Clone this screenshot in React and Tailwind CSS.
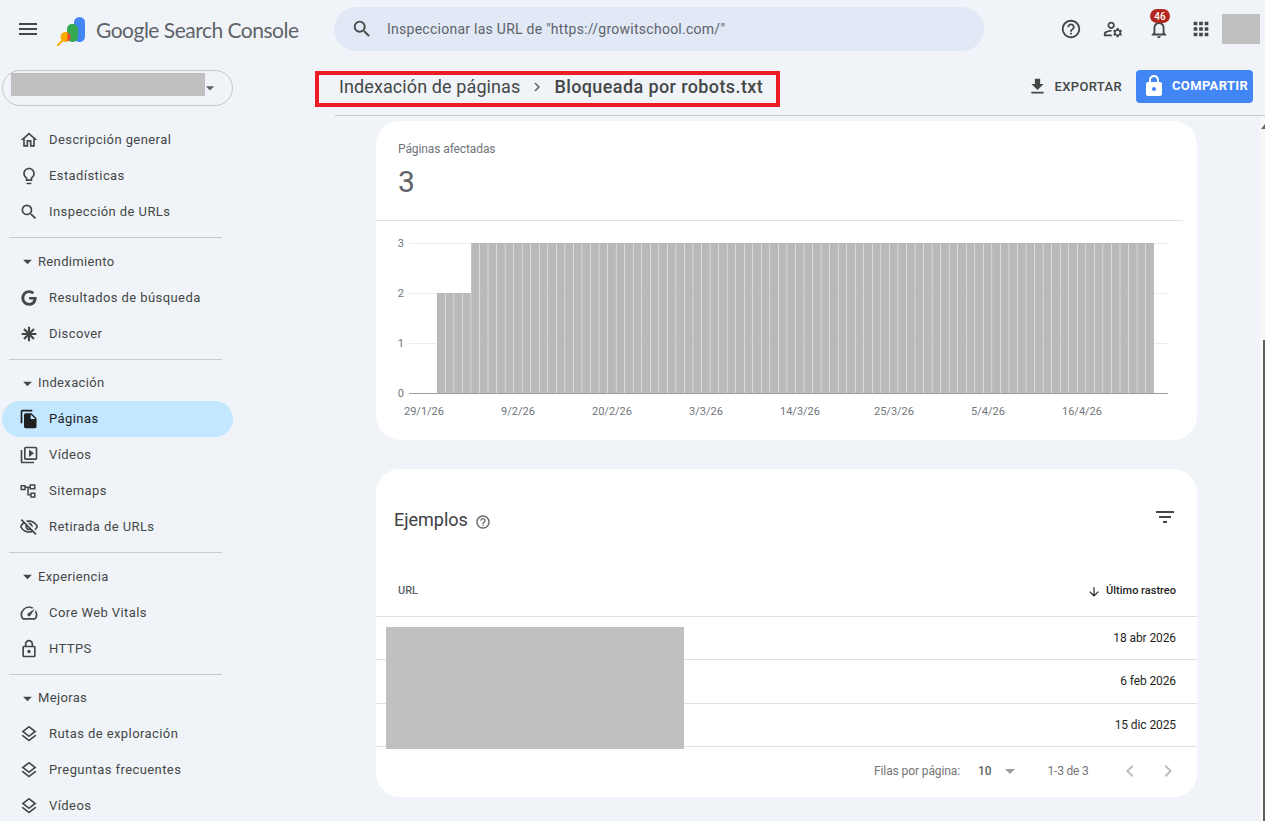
import {
  MdMenu, MdSearch, MdHelpOutline, MdOutlineManageAccounts, MdOutlineNotifications, MdApps,
  MdArrowDropDown, MdOutlineHome, MdOutlineLightbulb, MdFileCopy, MdOutlineVideoLibrary,
  MdOutlineVisibilityOff, MdOutlineSpeed, MdOutlineLock, MdOutlineLayers, MdFileDownload,
  MdLock, MdFilterList, MdArrowDownward, MdChevronLeft, MdChevronRight, MdOutlineHelpOutline,
} from "react-icons/md";
import { FaGoogle } from "react-icons/fa";

const Asterisk = ({ className }) => (
  <svg viewBox="0 0 24 24" className={className} fill="none" stroke="currentColor" strokeWidth="3.2">
    <path d="M12 1v22M1 12h22M4.5 4.5l15 15M19.5 4.5l-15 15" />
  </svg>
);

const SitemapIcon = ({ className }) => (
  <svg viewBox="0 0 24 24" className={className} fill="none" stroke="currentColor" strokeWidth="2">
    <path d="M3 5h5v5H3zM15 4h6v5h-6zM16 15h5v5h-5zM8 7h7M12 7v10h4" />
  </svg>
);

const Logo = () => (
  <svg viewBox="0 0 30 30" className="w-[30px] h-[30px] shrink-0 mt-1">
    <rect x="17" y="1" width="11" height="25" rx="5.5" fill="#4285f4" />
    <rect x="10" y="8" width="11" height="18" rx="5" fill="#34a853" />
    <circle cx="8.5" cy="21" r="5" fill="#f9ab00" />
    <path d="M10.5 16.4a5 5 0 0 1 0 9.2z" fill="#ea4335" />
    <path d="M5 25L1 29" stroke="#f9ab00" strokeWidth="2.2" strokeLinecap="round" />
  </svg>
);

const NavItem = ({ icon: Icon, label, active, iconClass = "w-5 h-5" }) => (
  <div className={`flex items-center h-9 rounded-full pl-[17px] text-[13px] tracking-[0.42px] ${active ? "bg-[#c2e7ff] text-[#1f1f1f]" : "text-[#444746]"}`}>
    <span className="w-[30px] shrink-0 flex items-center">
      <Icon className={`${iconClass} ${active ? "text-[#1f1f1f]" : "text-[#444746]"}`} />
    </span>
    {label}
  </div>
);

const Section = ({ title, children }) => (
  <div>
    <div className="h-px bg-[#c7c9cc] ml-[7px] w-[213px] mt-[7px] mb-[5.5px]" />
    <div className="flex items-center h-9 pl-[15px] text-[13px] tracking-[0.35px] text-[#444746]">
      <MdArrowDropDown className="w-[21px] h-[21px]" />
      {title}
    </div>
    {children}
  </div>
);

const Sidebar = () => (
  <aside className="w-[235px] shrink-0 px-0.5">
    <div className="h-[58px] flex items-center pl-[14px]">
      <MdMenu className="w-6 h-6 shrink-0 text-[#444746] mr-[17px]" />
      <Logo />
      <span className="ml-[9px] mt-0.5 text-[21px] tracking-[-0.5px] text-[#5f6368] whitespace-nowrap font-['Lato',sans-serif]">Google Search Console</span>
    </div>
    <div className="mt-3 h-9 w-[231px] rounded-full border border-[#c4c7c5] flex items-center pl-2">
      <div className="w-[194px] h-[23px] bg-[#c0c0c0] mb-[7px]" />
      <MdArrowDropDown className="w-5 h-5 -ml-[5px] text-[#5f6368]" />
    </div>
    <div className="mt-4">
      <NavItem icon={MdOutlineHome} label="Descripción general" />
      <NavItem icon={MdOutlineLightbulb} label="Estadísticas" />
      <NavItem icon={MdSearch} label="Inspección de URLs" />
    </div>
    <Section title="Rendimiento">
      <NavItem icon={FaGoogle} iconClass="w-4 h-4 ml-0.5" label="Resultados de búsqueda" />
      <NavItem icon={Asterisk} iconClass="w-4 h-4 ml-0.5" label="Discover" />
    </Section>
    <Section title="Indexación">
      <NavItem icon={MdFileCopy} active label="Páginas" />
      <NavItem icon={MdOutlineVideoLibrary} label="Vídeos" />
      <NavItem icon={SitemapIcon} iconClass="w-[18px] h-[18px]" label="Sitemaps" />
      <NavItem icon={MdOutlineVisibilityOff} label="Retirada de URLs" />
    </Section>
    <Section title="Experiencia">
      <NavItem icon={MdOutlineSpeed} label="Core Web Vitals" />
      <NavItem icon={MdOutlineLock} label="HTTPS" />
    </Section>
    <Section title="Mejoras">
      <NavItem icon={MdOutlineLayers} label="Rutas de exploración" />
      <NavItem icon={MdOutlineLayers} label="Preguntas frecuentes" />
      <NavItem icon={MdOutlineLayers} label="Vídeos" />
    </Section>
  </aside>
);

const TopBar = () => (
  <div className="h-[60px] flex items-start pt-[7px] pl-[99px] pr-[5px]">
    <div className="w-[650px] h-11 rounded-full bg-[#e1e9f7] flex items-center pl-[17px] text-[14px] tracking-[0.26px] text-[#5f6368]">
      <MdSearch className="w-[22px] h-[22px] text-[#444746] mr-[14px]" />
      Inspeccionar las URL de "https://growitschool.com/"
    </div>
    <div className="ml-auto flex items-center h-11">
      <MdHelpOutline className="w-[22px] h-[22px] text-[#444746]" />
      <MdOutlineManageAccounts className="w-[22px] h-[22px] text-[#444746] ml-[20px]" />
      <span className="relative ml-6">
        <MdOutlineNotifications className="w-[22px] h-[22px] text-[#444746]" />
        <span className="absolute -top-[9px] left-[2px] w-[20px] h-[14px] rounded-full bg-[#b3261e] text-white text-[10px] font-medium flex items-center justify-center">46</span>
      </span>
      <MdApps className="w-[22px] h-[22px] text-[#444746] ml-[20px]" />
      <div className="w-[38px] h-[30px] bg-[#c0c0c0] ml-[10px]" />
    </div>
  </div>
);

const Toolbar = () => (
  <div className="h-[56px] border-b border-[#c7c9cc] flex items-center">
    <div className="-ml-5 mt-[3px] h-9 w-[465px] border-4 border-[#ed1c24] flex items-center pl-5 pb-[5px] text-[18px] tracking-[0.1px] text-[#444746] whitespace-nowrap">
      <span>Indexación de páginas</span>
      <MdChevronRight className="w-[18px] h-[18px] mx-2 text-[#5f6368]" />
      <span className="font-medium tracking-[0.4px]">Bloqueada por robots.txt</span>
    </div>
    <div className="ml-auto flex items-center pr-3 -mt-0.5">
      <MdFileDownload className="w-[21px] h-[21px] -ml-0.5 text-[#444746]" />
      <span className="ml-[7px] text-[13px] font-medium tracking-[0.35px] text-[#444746]">EXPORTAR</span>
      <div className="ml-[14px] w-[117px] h-[33px] rounded bg-[#4285f4] flex items-center pl-[6px] pb-px text-white text-[13px] font-bold tracking-[0.35px]">
        <MdLock className="w-6 h-6 mr-[6px]" />
        COMPARTIR
      </div>
    </div>
  </div>
);

const bars = Array.from({ length: 84 }, (_, i) => i);
const yLabels = [["3", 243], ["2", 293], ["1", 343], ["0", 393]];
const xLabels = ["29/1/26", "9/2/26", "20/2/26", "3/3/26", "14/3/26", "25/3/26", "5/4/26", "16/4/26"];

const Chart = () => (
  <svg viewBox="0 0 821 210" className="w-[821px] h-[210px] block">
    {yLabels.map(([t, y]) => (
      <g key={t}>
        <line x1="33" x2="792" y1={y - 221 + 0.5} y2={y - 221 + 0.5} stroke={t === "0" ? "#9e9e9e" : "#ececec"} />
        <text x="28" y={y - 217} textAnchor="end" fontSize="11" fill="#70757a" fontFamily="Roboto, sans-serif">{t}</text>
      </g>
    ))}
    {bars.map((i) => (
      <rect key={i} x={61 + i * 8.54} y={i < 4 ? 72 : 22} width="8.1" height={i < 4 ? 100 : 150} fill="#b9b9b9" />
    ))}
    {xLabels.map((t, i) => (
      <text key={t} x={48 + i * 94} y="194" textAnchor="middle" fontSize="11" fill="#70757a" fontFamily="Roboto, sans-serif">{t}</text>
    ))}
  </svg>
);

const rows = ["18 abr 2026", "6 feb 2026", "15 dic 2025"];

export default function App() {
  return (
    <div className="relative h-[821px] w-[1265px] overflow-hidden flex bg-[#f0f4f9] font-['Roboto',sans-serif]">
      <Sidebar />
      <main className="flex-1 min-w-0 flex flex-col">
        <TopBar />
        <div className="pl-[100px]"><Toolbar /></div>
        <div className="pl-[141px] pr-[68px] pt-[5px]">
          <section className="bg-white rounded-[24px] h-[319px] overflow-hidden">
            <div className="h-[100px] mr-[14px] border-b border-[#e0e0e0] pl-[22px] pt-[19px]">
              <div className="text-[12px] tracking-[-0.1px] text-[#70757a]">Páginas afectadas</div>
              <div className="text-[30px] leading-[36px] mt-[6px] text-[#5f6368]">3</div>
            </div>
            <Chart />
          </section>
          <section className="relative bg-white rounded-[24px] h-[328px] mt-[29px] overflow-hidden">
            <div className="h-[100px] flex items-start justify-between pt-[37px] pl-[18px] pr-[20px]">
              <div className="flex items-center text-[18px] text-[#3c4043]">
                Ejemplos
                <MdOutlineHelpOutline className="w-4 h-4 ml-[7px] mt-1 text-[#5f6368]" />
              </div>
              <MdFilterList className="w-6 h-6 text-[#444746] -mt-px" />
            </div>
            <div className="h-[48px] flex items-center justify-between pl-[22px] pr-[21px] pb-0.5 border-b border-[#e0e0e0] text-[11px]">
              <span className="text-[#5f6368] font-medium">URL</span>
              <span className="flex items-center text-[#1f1f1f] font-medium">
                <MdArrowDownward className="w-[14px] h-[14px] mr-[5px]" />
                Último rastreo
              </span>
            </div>
            {rows.map((r) => (
              <div key={r} className="h-[43.33px] flex items-center justify-end pr-[21px] border-b border-[#e0e0e0] text-[12px] tracking-[-0.1px] text-[#1f1f1f]">{r}</div>
            ))}
            <div className="absolute left-[10px] top-[158px] w-[298px] h-[122px] bg-[#c0c0c0]" />
            <div className="h-[49px] flex items-center pl-[498px] text-[12px] tracking-[-0.1px] text-[#757575]">
              <span>Filas por página:</span>
              <span className="ml-[18px] text-[#5f6368] font-medium">10</span>
              <MdArrowDropDown className="w-6 h-6 ml-[6px] text-[#9e9e9e]" />
              <span className="ml-[26px] tracking-[-0.2px]">1-3 de 3</span>
              <MdChevronLeft className="w-6 h-6 ml-[29px] text-[#bdbdbd]" />
              <MdChevronRight className="w-6 h-6 ml-[14px] text-[#bdbdbd]" />
            </div>
          </section>
        </div>
      </main>
      {/* scrollbar del navegador */}
      <div className="absolute right-0 top-[116px] bottom-0 w-[5px] bg-[#f7f7f7]">
        <div className="absolute right-0 top-[224px] bottom-0 w-[2px] bg-[#5f5f5f]" />
        <div className="absolute right-0 top-[8px] w-0 h-0 border-l-[4px] border-r-0 border-b-[5px] border-l-transparent border-b-[#666]" />
      </div>
    </div>
  );
}
